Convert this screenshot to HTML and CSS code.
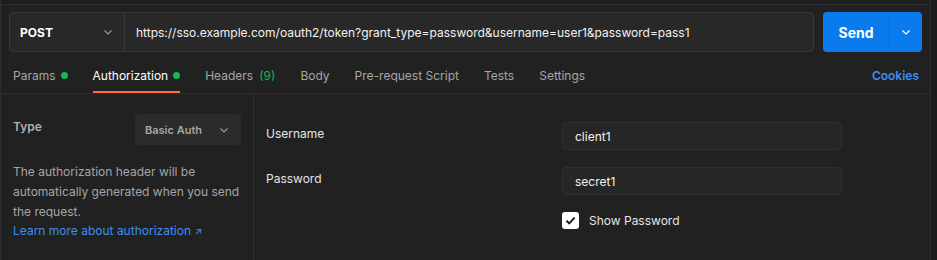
FILE: index.html
```html
<!DOCTYPE html>
<html>
<head>
<meta charset="utf-8">
<link rel="stylesheet" href="styles.css">
</head>
<body>
<div class="app">
  <div class="topstrip"></div>
  <div class="reqbar">
    <div class="urlbox">
      <div class="method">
        <span>POST</span>
        <svg class="chev" width="12" height="12" viewBox="0 0 12 12"><path d="M2.5 4.5 L6 8 L9.5 4.5" fill="none" stroke="#9a9a9a" stroke-width="1.1"/></svg>
      </div>
      <div class="url">https://sso.example.com/oauth2/token?grant_type=password&amp;username=user1&amp;password=pass1</div>
    </div>
    <div class="send">
      <span class="send-label">Send</span>
      <span class="send-arrow"><svg width="12" height="12" viewBox="0 0 12 12"><path d="M2.5 4.5 L6 8 L9.5 4.5" fill="none" stroke="#ffffff" stroke-width="1.2"/></svg></span>
    </div>
  </div>
  <div class="tabs">
    <div class="tab">Params<span class="dot"></span></div>
    <div class="tab active">Authorization<span class="dot"></span></div>
    <div class="tab">Headers<span class="count">(9)</span></div>
    <div class="tab">Body</div>
    <div class="tab">Pre-request Script</div>
    <div class="tab">Tests</div>
    <div class="tab">Settings</div>
    <div class="spacer"></div>
    <div class="cookies">Cookies</div>
  </div>
  <div class="content">
    <div class="left">
      <div class="typerow">
        <div class="typelabel">Type</div>
        <div class="select">
          <span>Basic Auth</span>
          <svg width="12" height="12" viewBox="0 0 12 12"><path d="M2.5 4.5 L6 8 L9.5 4.5" fill="none" stroke="#9a9a9a" stroke-width="1.1"/></svg>
        </div>
      </div>
      <p class="desc">The authorization header will be automatically generated when you send the request.</p>
      <a class="learn">Learn more about authorization <span class="arrow">↗</span></a>
    </div>
    <div class="right">
      <div class="field">
        <div class="label">Username</div>
        <div class="input">client1</div>
      </div>
      <div class="field">
        <div class="label">Password</div>
        <div class="input">secret1</div>
      </div>
      <div class="checkrow">
        <span class="checkbox"><svg width="13" height="13" viewBox="0 0 13 13"><path d="M2.5 6.8 L5.2 9.4 L10.6 3.6" fill="none" stroke="#1a1a1a" stroke-width="2"/></svg></span>
        <span class="checktext">Show Password</span>
      </div>
    </div>
  </div>
</div>
</body>
</html>
```

FILE: styles.css
```css
* { box-sizing: border-box; }
html, body {
  margin: 0;
  padding: 0;
  background: #1c1c1c;
  font-family: Inter, "Open Sans", sans-serif;
  font-size: 12px;
  color: #ffffff;
}
.app {
  width: 931px;
  height: 260px;
  background: #212121;
  border-left: 1px solid #2e2e2e;
  border-right: 1px solid #2e2e2e;
  display: flex;
  flex-direction: column;
}
.topstrip {
  flex: none;
  height: 5px;
  background: #1e1e1e;
  border-bottom: 1px solid #2c2c2c;
}
.reqbar {
  flex: none;
  display: flex;
  padding: 7px 8px 0 8px;
  gap: 9px;
}
.urlbox {
  flex: 1;
  height: 40px;
  display: flex;
  border: 1px solid #383838;
  border-radius: 4px;
  background: #282828;
}
.method {
  width: 115px;
  display: flex;
  align-items: center;
  justify-content: space-between;
  padding: 0 10px 0 10px;
  border-right: 1px solid #383838;
  font-weight: 700;
  font-size: 12px;
}
.url {
  display: flex;
  align-items: center;
  padding-left: 11px;
  font-size: 12px;
  color: #f2f2f2;
  white-space: nowrap;
}
.send {
  width: 99px;
  height: 40px;
  display: flex;
  background: #097bed;
  border-radius: 4px;
}
.send-label {
  width: 67px;
  display: flex;
  align-items: center;
  justify-content: center;
  font-weight: 700;
  font-size: 14px;
  border-right: 1px solid #0a6fd4;
}
.send-arrow {
  flex: 1;
  display: flex;
  align-items: center;
  justify-content: center;
}
.tabs {
  flex: none;
  height: 42px;
  display: flex;
  align-items: stretch;
  padding: 0 11px 0 12px;
  border-bottom: 1px solid #2f2f2f;
}
.tab {
  display: flex;
  align-items: center;
  margin-right: 25px;
  color: #a6a6a6;
  font-size: 12px;
  border-bottom: 2px solid transparent;
  padding-top: 7px;
  white-space: pre;
}
.tab.active {
  color: #ffffff;
  border-bottom-color: #ff6c37;
}
.dot {
  width: 7px;
  height: 7px;
  border-radius: 50%;
  background: #0cbb52;
  margin-left: 5px;
}
.count { color: #0cbb52; margin-left: 6px; }
.spacer { flex: 1; }
.cookies {
  display: flex;
  align-items: center;
  color: #3d8ef5;
  font-weight: 600;
  font-size: 12px;
  padding-top: 7px;
  padding-bottom: 2px;
}
.content {
  flex: 1;
  display: flex;
}
.left {
  width: 253px;
  border-right: 1px solid #2f2f2f;
  padding: 20px 12px 0 12px;
}
.typerow {
  display: flex;
  justify-content: space-between;
  align-items: flex-start;
}
.typelabel {
  color: #b0b0b0;
  font-weight: 600;
  font-size: 12px;
  margin-top: 5px;
}
.select {
  width: 106px;
  height: 31px;
  background: #2b2b2b;
  border-radius: 4px;
  display: flex;
  align-items: center;
  justify-content: space-between;
  padding: 0 11px 0 10px;
  color: #a6a6a6;
  font-weight: 600;
  font-size: 11px;
}
.desc {
  margin: 17px 0 0 0;
  color: #a6a6a6;
  font-size: 12px;
  line-height: 20px;
}
.learn {
  display: block;
  color: #3d8ef5;
  font-size: 12px;
  line-height: 18px;
}
.arrow { font-size: 10px; }
.right {
  flex: 1;
  padding: 28px 0 0 12px;
}
.field {
  display: flex;
  align-items: flex-start;
  margin-bottom: 17px;
}
.label {
  width: 296px;
  color: #e6e6e6;
  font-size: 12px;
  margin-top: 4px;
}
.input {
  width: 280px;
  height: 28px;
  background: #262626;
  border: 1px solid #303030;
  border-radius: 4px;
  display: flex;
  align-items: center;
  padding-left: 12px;
  color: #f2f2f2;
  font-size: 12px;
}
.checkrow {
  display: flex;
  align-items: center;
  margin-left: 296px;
}
.checkbox {
  width: 17px;
  height: 17px;
  background: #ffffff;
  border-radius: 3px;
  display: flex;
  align-items: center;
  justify-content: center;
}
.checktext {
  margin-left: 10px;
  color: #e6e6e6;
  font-size: 12px;
}
```
